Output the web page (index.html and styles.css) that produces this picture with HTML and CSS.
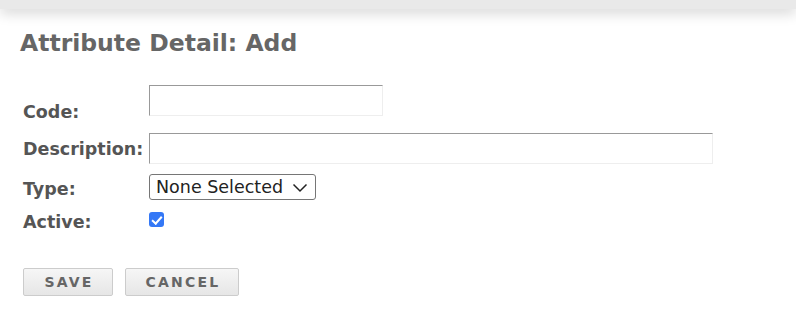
FILE: index.html
```html
<!DOCTYPE html>
<html lang="en">
<head>
  <meta charset="UTF-8">
  <meta name="viewport" content="width=device-width, initial-scale=1.0">
  <title>Attribute Detail</title>
  <link rel="stylesheet" href="styles.css">
</head>
<body>
<div class="top-bar"></div>

<div class="content">
  <h1 class="page-title">Attribute Detail: Add</h1>

  <form class="detail-form" onsubmit="return false;">
    <div class="form-row row-code">
      <label for="code">Code:</label>
      <input type="text" id="code" class="text-input code-input">
    </div>
    <div class="form-row">
      <label for="description">Description:</label>
      <input type="text" id="description" class="text-input desc-input">
    </div>
    <div class="form-row row-type">
      <label for="type">Type:</label>
      <div class="select-wrap">
        <select id="type" class="type-select">
          <option>None Selected</option>
        </select>
        <svg class="chevron" width="16" height="10" viewBox="0 0 16 10"><path d="M1.5 1.5 L8 8 L14.5 1.5" fill="none" stroke="#222" stroke-width="1.5"/></svg>
      </div>
    </div>
    <div class="form-row row-active">
      <label for="active">Active:</label>
      <input type="checkbox" id="active" class="check" checked>
    </div>

    <div class="actions">
      <button class="btn btn-save">SAVE</button>
      <button class="btn btn-cancel">CANCEL</button>
    </div>
  </form>
</div>
</body>
</html>
```

FILE: styles.css
```css
body {
  margin: 0;
  font-family: "DejaVu Sans", Verdana, sans-serif;
  background: #fff;
  color: #555;
}
.top-bar {
  height: 9px;
  background: #e9e9e9;
  box-shadow: 0 3px 14px rgba(0, 0, 0, 0.22);
}
.content {
  padding: 0 0 0 20px;
}
.page-title {
  margin: 19px 0 0;
  font-size: 23.5px;
  font-weight: bold;
  color: #666;
  line-height: 30px;
}
.detail-form {
  margin-top: 27px;
  padding-left: 3px;
}
.form-row {
  display: flex;
  align-items: center;
  margin-bottom: 17px;
}
.form-row label {
  width: 126px;
  flex: none;
  font-size: 17.5px;
  font-weight: bold;
  color: #555;
}
.row-code label {
  align-self: flex-end;
  margin-bottom: -6px;
}
.row-type label {
  margin-top: -2px;
  margin-bottom: 2px;
}
.text-input {
  box-sizing: border-box;
  height: 31px;
  border: 1px solid #eee;
  border-top-color: #999;
  border-left-color: #999;
  padding: 4px 6px;
  font-size: 15px;
  font-family: inherit;
  outline: none;
}
.code-input { width: 234px; }
.desc-input { width: 564px; }

.select-wrap {
  position: relative;
  margin-top: -9px;
}
.type-select {
  appearance: none;
  -webkit-appearance: none;
  box-sizing: border-box;
  width: 167px;
  height: 26px;
  border: 1px solid #767676;
  border-radius: 3px;
  background: #fff;
  padding: 0 0 0 6px;
  font-family: inherit;
  font-size: 17.5px;
  color: #222;
}
.chevron {
  position: absolute;
  right: 8px;
  top: 9px;
  pointer-events: none;
}

.row-active {
  margin-top: -6px;
}
.check {
  appearance: none;
  -webkit-appearance: none;
  position: relative;
  width: 15px;
  height: 15px;
  margin: -5px 0 0;
  border-radius: 3px;
  background: #3478f6;
}
.check:checked::after {
  content: "";
  position: absolute;
  left: 5px;
  top: 1.5px;
  width: 3.5px;
  height: 8px;
  border: solid #fff;
  border-width: 0 2px 2px 0;
  transform: rotate(42deg);
}

.actions {
  display: flex;
  gap: 12px;
  margin-top: 36px;
}
.btn {
  box-sizing: border-box;
  height: 28px;
  border: 1px solid #ccc;
  border-radius: 2px;
  background: linear-gradient(#f6f6f6, #e6e6e6);
  color: #666;
  font-family: inherit;
  font-size: 14px;
  font-weight: bold;
  letter-spacing: 2.2px;
  padding: 0 0 0 2px;
  cursor: pointer;
}
.btn-save { width: 90px; }
.btn-cancel { width: 114px; }
```
